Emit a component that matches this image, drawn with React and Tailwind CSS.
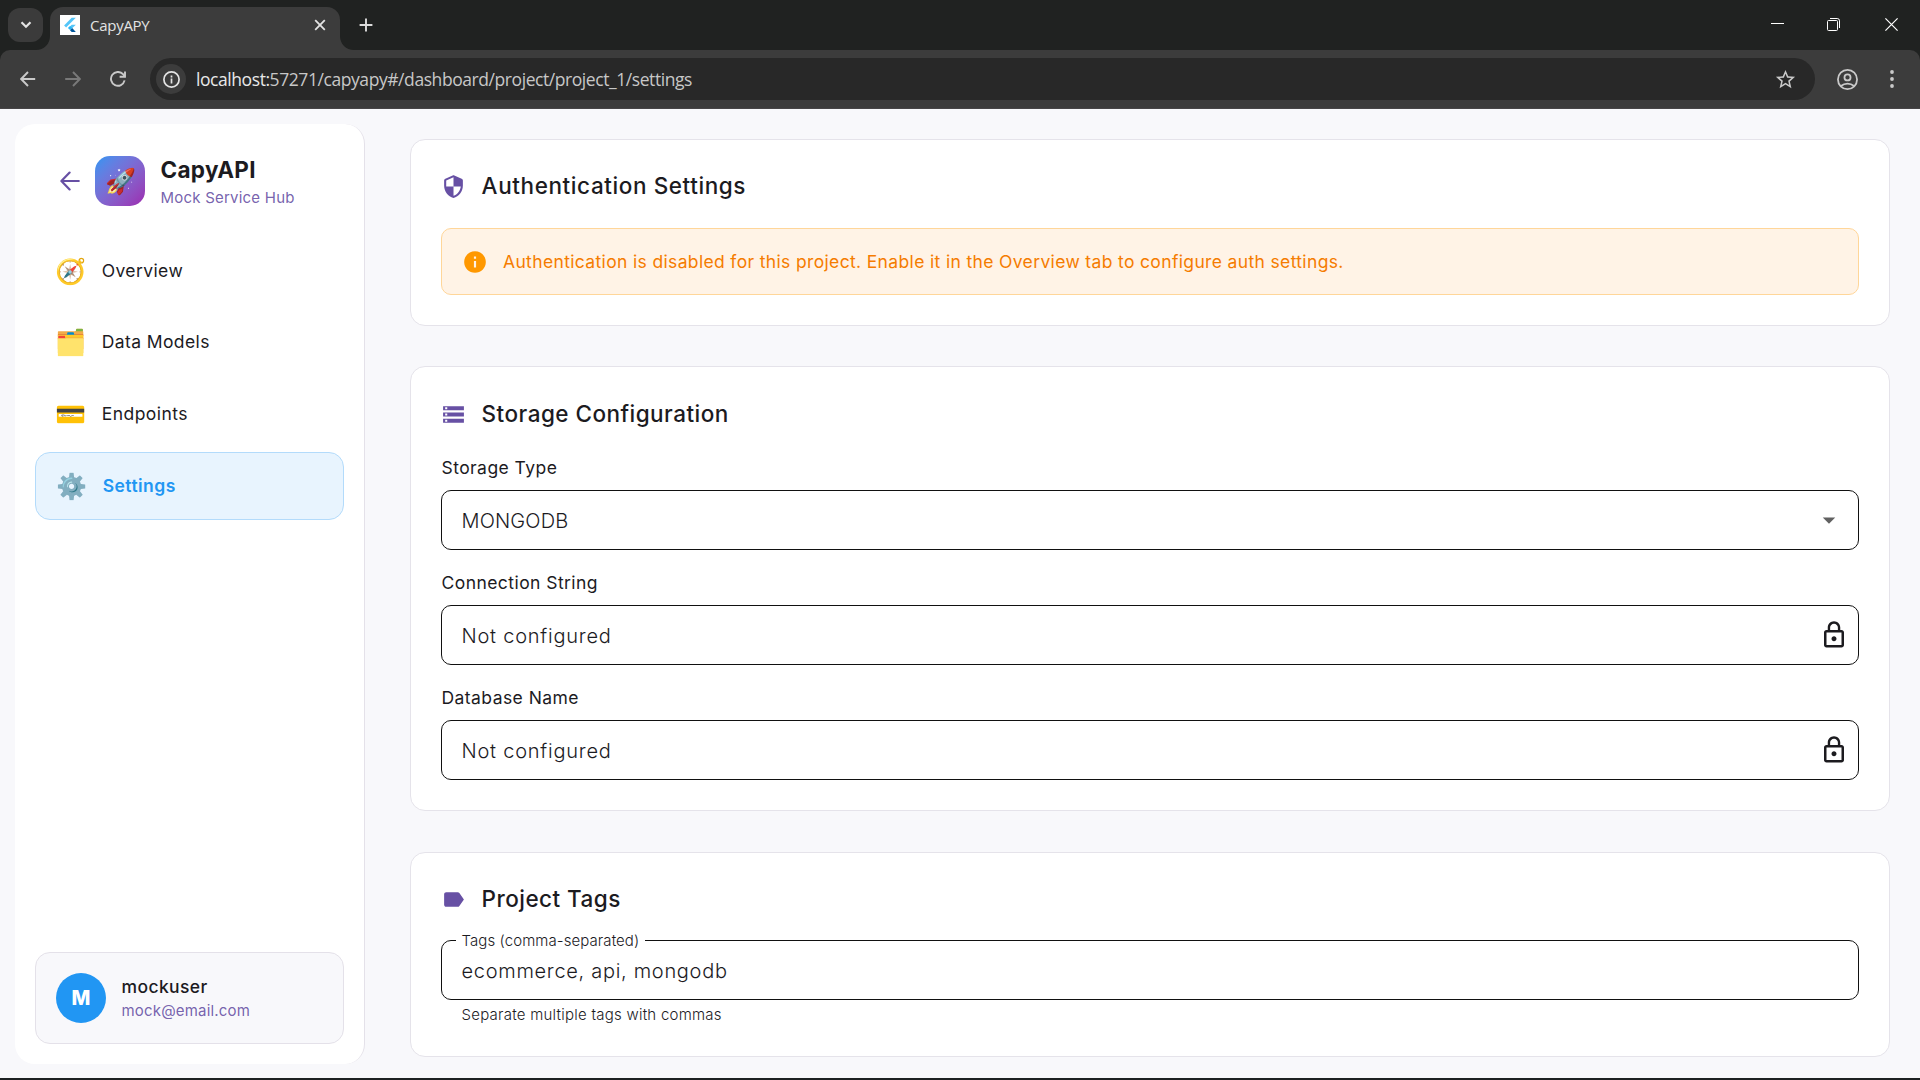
import React from "react";

const PATHS = {
  shield:
    "M11.19 1.36l-7 3.11C3.47 4.79 3 5.51 3 6.3V11c0 5.55 3.84 10.74 9 12 5.16-1.26 9-6.45 9-12V6.3c0-.79-.47-1.51-1.19-1.83l-7-3.11c-.51-.23-1.11-.23-1.62 0zM12 11.99h7c-.53 4.12-3.28 7.79-7 8.94V12H5V6.3l7-3.11v8.8z",
  storage:
    "M2 20h20v-4H2v4zm2-3h2v2H4v-2zM2 4v4h20V4H2zm4 3H4V5h2v2zm-4 7h20v-4H2v4zm2-3h2v2H4v-2z",
  label:
    "M17.63 5.84C17.27 5.33 16.67 5 16 5L5 5.01C3.9 5.01 3 5.9 3 7v10c0 1.1.9 1.99 2 1.99L16 19c.67 0 1.27-.33 1.63-.84L22 12l-4.37-6.16z",
  info: "M12 2C6.48 2 2 6.48 2 12s4.48 10 10 10 10-4.48 10-10S17.52 2 12 2zm1 15h-2v-6h2v6zm0-8h-2V7h2v2z",
  lock: "M12 17c1.1 0 2-.9 2-2s-.9-2-2-2-2 .9-2 2 .9 2 2 2zm6-9h-1V6c0-2.76-2.24-5-5-5S7 3.24 7 6v2H6c-1.1 0-2 .9-2 2v10c0 1.1.9 2 2 2h12c1.1 0 2-.9 2-2V10c0-1.1-.9-2-2-2zM8.9 6c0-1.71 1.39-3.1 3.1-3.1s3.1 1.39 3.1 3.1v2H8.9V6zM18 20H6V10h12v10z",
  caret: "M7 10l5 5 5-5z",
  star: "M22 9.24l-7.19-.62L12 2 9.19 8.63 2 9.24l5.46 4.73L5.82 21 12 17.27 18.18 21l-1.63-7.03L22 9.24zM12 15.4l-3.76 2.27 1-4.28-3.32-2.88 4.38-.38L12 6.1l1.71 4.04 4.38.38-3.32 2.88 1 4.28L12 15.4z",
};

function Icon({ name, className }) {
  return (
    <svg viewBox="0 0 24 24" fill="currentColor" className={className}>
      <path d={PATHS[name]} />
    </svg>
  );
}

function TitleBar() {
  return (
    <div className="flex h-[50px] items-start bg-[#202221]">
      <div className="mt-2 ml-2 flex h-[34px] w-[35px] items-center justify-center rounded-[12px] bg-[#3b3b3b]">
        <svg viewBox="0 0 12 8" className="h-2 w-3" fill="none" stroke="#e3e3e3" strokeWidth="2.2">
          <path d="M1.5 1.2L6 5.7l4.5-4.5" />
        </svg>
      </div>
      <svg viewBox="0 0 14 14" className="-ml-[7px] mt-9 h-[14px] w-[14px]" fill="#3c3c3c">
        <path d="M14 0v14H0C8 14 14 8 14 0z" />
      </svg>
      <div className="mt-[7px] flex h-[43px] w-[290px] items-center rounded-t-[13px] bg-[#3c3c3c] pb-[7px] pl-[10px]">
        <svg viewBox="0 0 20 20" className="h-5 w-5">
          <path fill="#fff" d="M0 0h20v20H0z" />
          <path fill="#54c5f8" d="M11.7 2.8h4.1L6.1 12.4l-2-2z" />
          <path fill="#54c5f8" d="M11.7 9.7h4.1l-3.4 3.4-2.3 0-1.6-0.2z" />
          <path fill="#29b6f6" d="M7.9 13.1l2.1-2.1 2.3 2.1-2.2 2z" />
          <path fill="#01579b" d="M10 15.2l2.2-2.1 3.6 3.8h-4.1z" />
        </svg>
        <span className="ml-[10px] flex-1 font-['Open_Sans',sans-serif] text-[15px] leading-5 tracking-[-0.27px] text-[#e3e3e3]">
          CapyAPY
        </span>
        <svg viewBox="0 0 12 12" className="mr-[14px] h-3 w-3" fill="none" stroke="#e3e3e3" strokeWidth="1.8">
          <path d="M1.2 1.2l9.6 9.6M10.8 1.2l-9.6 9.6" />
        </svg>
      </div>
      <svg viewBox="0 0 14 14" className="mt-9 h-[14px] w-[14px]" fill="#3c3c3c">
        <path d="M0 0v14h14C6 14 0 8 0 0z" />
      </svg>
      <svg viewBox="0 0 14 14" className="mt-[18px] ml-[5px] h-[14px] w-[14px]" fill="none" stroke="#dcdcdc" strokeWidth="1.9">
        <path d="M7 .6v12.8M.6 7h12.8" />
      </svg>
      <div className="ml-auto flex pt-[18px] text-white">
        <svg viewBox="0 0 13 13" className="h-[13px] w-[13px]" fill="currentColor">
          <path d="M0 5h13v1H0z" />
        </svg>
        <svg viewBox="0 0 13 13" className="ml-[43px] h-[13px] w-[13px]" fill="none" stroke="currentColor">
          <rect x=".5" y="2.5" width="10" height="10" rx="1" />
          <path d="M3 .5h7.2a2.3 2.3 0 0 1 2.3 2.3V10" />
        </svg>
        <svg viewBox="0 0 13 13" className="mr-[22px] ml-[45px] h-[13px] w-[13px]" fill="none" stroke="currentColor" strokeWidth="1.2">
          <path d="M.4.4l12.2 12.2M12.6.4L.4 12.6" />
        </svg>
      </div>
    </div>
  );
}

function Toolbar() {
  return (
    <div className="bg-[#202221]">
      <div className="flex h-[59px] items-center rounded-t-[10px] border-b border-[#474547] bg-[#3c3c3c] text-[#c9c9c9]">
        <svg viewBox="0 0 16 16" className="ml-5 h-4 w-4" fill="none" stroke="currentColor" strokeWidth="1.9">
          <path d="M15.2 8H1.6M8 1L1.2 8 8 15" />
        </svg>
        <svg viewBox="0 0 16 16" className="ml-[29px] h-4 w-4 text-[#797979]" fill="none" stroke="currentColor" strokeWidth="1.9">
          <path d="M.2 8h14.2M8 1l6.8 7L8 15" />
        </svg>
        <svg viewBox="0 0 16 16" className="ml-[28.5px] h-4 w-4" fill="none" stroke="currentColor" strokeWidth="1.9">
          <path d="M14.6 9.4A6.9 6.9 0 1 1 13 3.2L15 5.6" />
          <path d="M15 .4v5.4H9.6" />
        </svg>
        <div className="ml-[24.5px] flex h-[42px] w-[1665px] items-center rounded-full bg-[#282828] pl-[6px]">
          <div className="flex h-[30px] w-[30px] items-center justify-center rounded-full bg-[#3c3c3c]">
            <svg viewBox="0 0 17 17" className="h-[17px] w-[17px]" fill="none" stroke="#e3e3e3" strokeWidth="1.7">
              <circle cx="8.5" cy="8.5" r="7.6" />
              <path d="M8.5 7.6v4.8M8.5 4.6v1.8" />
            </svg>
          </div>
          <span className="ml-[10px] flex-1 font-['Open_Sans',sans-serif] text-[17.5px] leading-6 tracking-[-0.43px] text-[#c7c7c7]">
            <span className="text-[#e8e8e8]">localhost:</span>57271/capyapy#/dashboard/project/project_1/settings
          </span>
          <Icon name="star" className="mr-[18px] h-[23px] w-[23px]" />
        </div>
        <svg viewBox="0 0 20 20" className="ml-[22px] h-[21px] w-[21px]" fill="none" stroke="currentColor" strokeWidth="1.7">
          <circle cx="10" cy="10" r="9.1" />
          <circle cx="10" cy="8" r="2.9" />
          <path d="M3.8 16.2c3.6-3 8.8-3 12.4 0" />
        </svg>
        <svg viewBox="0 0 4 18" className="ml-8 h-[18px] w-1" fill="currentColor">
          <circle cx="2" cy="2" r="1.9" />
          <circle cx="2" cy="9" r="1.9" />
          <circle cx="2" cy="16" r="1.9" />
        </svg>
      </div>
    </div>
  );
}

const NAV = [
  { icon: "🧭", text: "Overview", spacing: "tracking-[0.4px]" },
  { icon: "🗂️", text: "Data Models", spacing: "tracking-[0.4px]" },
  { icon: "💳", text: "Endpoints", spacing: "tracking-[0.46px]" },
  { icon: "⚙️", text: "Settings", spacing: "tracking-[0.46px]", active: true },
];

function NavItem({ icon, text, spacing, active }) {
  const state = active
    ? "-mt-px h-[68.5px] border border-[#b3dbfb] bg-[#e8f4fe] pt-px font-semibold text-[#2196f3]"
    : "h-[66px] text-[#1c1b1f]";
  return (
    <div className={`flex items-center rounded-[15px] pl-5 ${state}`}>
      <span className="w-[31px] text-[25px] leading-none">{icon}</span>
      <span className={`ml-[15.7px] text-[17.5px] ${spacing}`}>{text}</span>
    </div>
  );
}

function Sidebar() {
  return (
    <aside className="flex w-[350px] flex-col rounded-[20px] border-r border-[#e4e1e9] bg-white px-5 pb-5">
      <div className="flex h-[114px] items-center pl-5">
        <svg viewBox="0 0 20 20" className="ml-[5px] h-5 w-5" fill="none" stroke="#6750a4" strokeWidth="2.2" strokeLinecap="round" strokeLinejoin="round">
          <path d="M18.8 10H1.6M9.6 1.6L1.4 10l8.2 8.4" />
        </svg>
        <div className="ml-[15px] flex h-[50px] w-[50px] items-center justify-center rounded-[15px] bg-gradient-to-br from-[#2196f3] to-[#9c27b0] text-[25px] leading-none">
          🚀
        </div>
        <div className="ml-[15.5px] pt-[5px]">
          <div className="text-[22.5px] leading-[28px] font-[650] tracking-[0.3px] text-[#1c1b1f]">CapyAPI</div>
          <div className="text-[15px] leading-[27px] tracking-[0.22px] text-[#6750a4]/90">Mock Service Hub</div>
        </div>
      </div>
      <nav className="flex flex-1 flex-col gap-[5.5px]">
        {NAV.map((item) => (
          <NavItem key={item.text} {...item} />
        ))}
      </nav>
      <div className="flex h-[92px] items-center rounded-[15px] border border-[#e4e1e9] bg-[#f8f8fb] pl-5">
        <div className="flex h-[50px] w-[50px] items-center justify-center rounded-full bg-[#2196f3] text-[20px] font-extrabold text-white">
          M
        </div>
        <div className="ml-[15.5px] pt-px">
          <div className="text-[17.5px] leading-6 font-[550] tracking-[0.4px] text-[#1c1b1f]">mockuser</div>
          <div className="text-[15px] leading-6 tracking-[0.18px] text-[#6750a4]/90">mock@email.com</div>
        </div>
      </div>
    </aside>
  );
}

function Card({ icon, title, spacing, className, children }) {
  return (
    <section className={`rounded-[15px] border border-[#e5e3ea] bg-white px-[30px] ${className}`}>
      <div className="flex items-center text-[#6750a4]">
        <Icon name={icon} className="h-[25px] w-[25px]" />
        <h2 className={`ml-[15.6px] text-[22.5px] leading-[34px] font-[550] text-[#1c1b1f] ${spacing}`}>{title}</h2>
      </div>
      {children}
    </section>
  );
}

function Field({ label, value, valueSpacing, children }) {
  return (
    <div className="mb-[15px]">
      <div className="flex h-10 items-start pt-[5px] pl-[0.5px] text-[17.5px] leading-[26px] tracking-[0.44px] text-[#1c1b1f]">{label}</div>
      <div className={`flex h-[60px] items-center rounded-[10px] border border-[#111] pl-[19.5px] text-[20px] font-[350] text-[#1c1b1f] ${valueSpacing}`}>
        <span className="flex-1 pt-px">{value}</span>
        {children}
      </div>
    </div>
  );
}

export default function App() {
  return (
    <div className="flex h-[1080px] w-[1920px] flex-col overflow-hidden border-b-2 border-[#1d2122] bg-[#f8f8fb] font-['Inter',sans-serif]">
      <TitleBar />
      <Toolbar />
      <div className="flex flex-1 pt-[15px] pb-[14px] pl-[15px]">
        <Sidebar />
        <main className="ml-[45px] flex w-[1480px] flex-col pt-[15px]">
          <Card icon="shield" title="Authentication Settings" spacing="tracking-[0.59px]" className="h-[187px] pt-[29px]">
            <div className="mt-[25px] flex h-[67px] items-center rounded-[10px] border border-[#ffd699] bg-[#fff3e6] pl-5">
              <Icon name="info" className="h-[26px] w-[26px] text-[#ff9800]" />
              <span className="ml-[15px] pt-px text-[17.5px] tracking-[0.35px] text-[#f57c00]">
                Authentication is disabled for this project. Enable it in the Overview tab to configure auth settings.
              </span>
            </div>
          </Card>
          <Card icon="storage" title="Storage Configuration" spacing="tracking-[0.47px]" className="mt-[40px] h-[445px] pt-[30px]">
            <div className="mt-[19px]">
              <Field label="Storage Type" value="MONGODB" valueSpacing="tracking-[0.15px]">
                <Icon name="caret" className="mr-[14px] h-[30px] w-[30px] text-[#616161]" />
              </Field>
              <Field label="Connection String" value="Not configured" valueSpacing="tracking-[0.77px]">
                <Icon name="lock" className="mr-[9px] h-[30px] w-[30px]" />
              </Field>
              <Field label="Database Name" value="Not configured" valueSpacing="tracking-[0.77px]">
                <Icon name="lock" className="mr-[9px] h-[30px] w-[30px]" />
              </Field>
            </div>
          </Card>
          <Card icon="label" title="Project Tags" spacing="tracking-[0.46px]" className="mt-[41px] h-[205px] pt-[29px]">
            <fieldset className="mt-[14px] h-[70px] rounded-[10px] border border-[#111] px-[14px]">
              <legend className="h-5 px-[5.5px] pt-px text-[15px] leading-5 font-[350] tracking-[0.08px] text-[#1c1b1f]">Tags (comma-separated)</legend>
              <div className="pl-[5.5px] text-[20px] leading-[42px] font-[350] tracking-[0.7px] text-[#1c1b1f]">ecommerce, api, mongodb</div>
            </fieldset>
            <div className="mt-[5px] pl-[20.5px] text-[15px] leading-5 font-[350] tracking-[0.24px] text-[#1c1b1f]">
              Separate multiple tags with commas
            </div>
          </Card>
        </main>
      </div>
    </div>
  );
}
